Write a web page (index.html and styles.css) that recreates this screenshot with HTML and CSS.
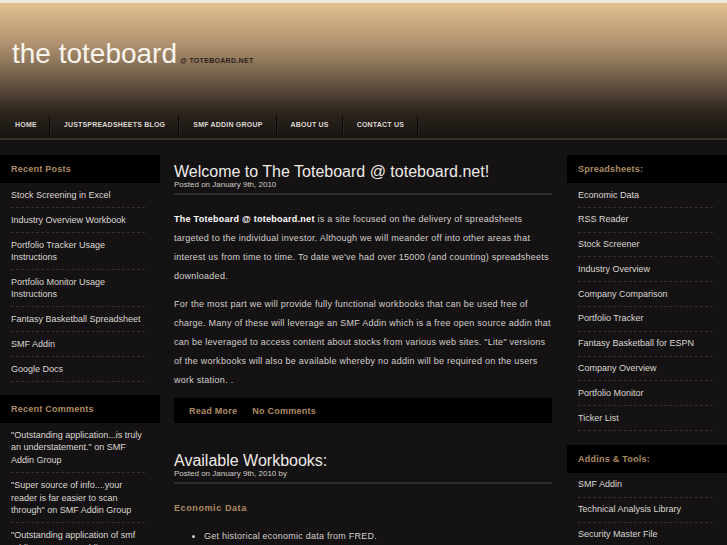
FILE: index.html
```html
<!DOCTYPE html>
<html>
<head>
<meta charset="utf-8">
<title>the toteboard</title>
<link rel="stylesheet" href="styles.css">
</head>
<body>
<div class="topline"></div>
<header class="masthead">
  <h1 class="site-title">the toteboard</h1>
  <span class="site-sub">@ TOTEBOARD.NET</span>
</header>
<nav class="nav">
  <a class="nav-item" href="#">HOME</a>
  <a class="nav-item" href="#">JUSTSPREADSHEETS BLOG</a>
  <a class="nav-item" href="#">SMF ADDIN GROUP</a>
  <a class="nav-item" href="#">ABOUT US</a>
  <a class="nav-item" href="#">CONTACT US</a>
</nav>
<div class="wrap">
  <aside class="sidebar sidebar-left">
    <section class="widget">
      <h2 class="widget-title">Recent Posts</h2>
      <ul class="widget-list">
        <li>Stock Screening in Excel</li>
        <li>Industry Overview Workbook</li>
        <li>Portfolio Tracker Usage Instructions</li>
        <li>Portfolio Monitor Usage Instructions</li>
        <li>Fantasy Basketball Spreadsheet</li>
        <li>SMF Addin</li>
        <li>Google Docs</li>
      </ul>
    </section>
    <section class="widget">
      <h2 class="widget-title">Recent Comments</h2>
      <ul class="widget-list comments">
        <li>"Outstanding application...is truly an understatement." on SMF Addin Group</li>
        <li>"Super source of info....your reader is far easier to scan through" on SMF Addin Group</li>
        <li>"Outstanding application of smf addin..." on SMF Addin Group</li>
      </ul>
    </section>
  </aside>
  <main class="main">
    <article class="post">
      <div class="post-head">
        <h2 class="post-title">Welcome to The Toteboard @ toteboard.net!</h2>
        <div class="post-meta">Posted on January 9th, 2010</div>
      </div>
      <div class="post-body">
        <p><strong>The Toteboard @ toteboard.net</strong> is a site focused on the delivery of spreadsheets targeted to the individual investor. Although we will meander off into other areas that interest us from time to time. To date we've had over 15000 (and counting) spreadsheets downloaded.</p>
        <p>For the most part we will provide fully functional workbooks that can be used free of charge. Many of these will leverage an SMF Addin which is a free open source addin that can be leveraged to access content about stocks from various web sites. "Lite" versions of the workbooks will also be available whereby no addin will be required on the users work station. .</p>
      </div>
      <div class="post-foot">
        <a href="#">Read More</a>
        <a href="#">No Comments</a>
      </div>
    </article>
    <article class="post">
      <div class="post-head">
        <h2 class="post-title">Available Workbooks:</h2>
        <div class="post-meta">Posted on January 9th, 2010 by</div>
      </div>
      <div class="post-body">
        <h3 class="sub-title">Economic Data</h3>
        <ul class="bullets">
          <li>Get historical economic data from FRED.</li>
          <li>Charts and tables of key indicators.</li>
        </ul>
      </div>
    </article>
  </main>
  <aside class="sidebar sidebar-right">
    <section class="widget">
      <h2 class="widget-title">Spreadsheets:</h2>
      <ul class="widget-list">
        <li>Economic Data</li>
        <li>RSS Reader</li>
        <li>Stock Screener</li>
        <li>Industry Overview</li>
        <li>Company Comparison</li>
        <li>Portfolio Tracker</li>
        <li>Fantasy Basketball for ESPN</li>
        <li>Company Overview</li>
        <li>Portfolio Monitor</li>
        <li>Ticker List</li>
      </ul>
    </section>
    <section class="widget">
      <h2 class="widget-title">Addins &amp; Tools:</h2>
      <ul class="widget-list">
        <li>SMF Addin</li>
        <li>Technical Analysis Library</li>
        <li>Security Master File</li>
        <li>Stock Data Downloader</li>
      </ul>
    </section>
  </aside>
</div>
</body>
</html>
```
FILE: styles.css
```css
* { box-sizing: border-box; }
html, body { margin: 0; padding: 0; }
body {
  background: #141212;
  font-family: "Liberation Sans", Arial, sans-serif;
  color: #d6d2ce;
}
a { text-decoration: none; color: inherit; }

.topline { height: 3px; background: #eee8df; }

.masthead {
  height: 107px;
  background: linear-gradient(#e2c08f 0%, #b0926f 38%, #6c5a47 72%, #31271f 100%);
  display: flex;
  align-items: baseline;
  padding: 37px 0 0 12px;
}
.site-title {
  margin: 0;
  font-size: 28px;
  line-height: 28px;
  font-weight: normal;
  color: #f8f4ee;
}
.site-sub {
  margin-left: 3px;
  font-size: 7px;
  font-weight: bold;
  letter-spacing: 0.3px;
  color: #2b2219;
}

.nav {
  height: 30px;
  background: linear-gradient(#30271f, #161311);
  border-bottom: 2px solid #3b2f25;
  display: flex;
  align-items: flex-start;
  padding-top: 6px;
}
.nav-item {
  height: 22px;
  line-height: 18px;
  padding: 0 13px 0 14px;
  font-size: 7px;
  font-weight: bold;
  letter-spacing: 0.2px;
  color: #dcd8d2;
  border-right: 1px solid #0a0807;
  box-shadow: 1px 0 0 #2a231d;
}
.nav-item:first-child { padding-left: 15px; padding-right: 12px; }

.wrap {
  display: flex;
  align-items: flex-start;
  padding-top: 15px;
}

.sidebar { width: 160px; flex: none; }

.widget { margin-bottom: 14px; }
.sidebar-left .widget { margin-bottom: 13px; }
.widget-title {
  margin: 0;
  background: #000;
  height: 28px;
  padding: 8px 11px;
  font-size: 9px;
  line-height: 12px;
  font-weight: bold;
  letter-spacing: 0.25px;
  color: #ad8c63;
}
.widget-list {
  list-style: none;
  margin: 0;
  padding: 0 15px 0 11px;
}
.sidebar-right .widget-list { padding-right: 14px; }
.widget-list li {
  padding: 6.5px 0 5.5px;
  font-size: 9px;
  line-height: 11.8px;
  color: #dcd8d3;
  border-bottom: 1px dashed #3a2f25;
}
.sidebar-left .widget-list li { padding: 6px 0; line-height: 12px; }
.sidebar-left .comments li { line-height: 12.4px; }

.main {
  width: 378px;
  flex: none;
  margin: 0 15px 0 14px;
  padding-top: 9px;
}
.post { margin-bottom: 30px; }
.post-head {
  padding-bottom: 4px;
  border-bottom: 2px solid #2e2c2c;
}
.post-title {
  margin: 0;
  font-size: 16px;
  line-height: 16px;
  font-weight: normal;
  color: #eeeae6;
}
.post-meta {
  font-size: 8px;
  line-height: 9px;
  color: #d0ccc8;
}
.post-body { padding-top: 15px; }
.post-body p {
  margin: 0 0 9px;
  font-size: 9px;
  line-height: 19px;
  letter-spacing: 0.26px;
  color: #d4d0cc;
}
.post-body p:last-child { margin-bottom: 0; }
.post-body strong { color: #fff; }
.post-foot {
  margin-top: 8px;
  height: 25px;
  background: #000;
  display: flex;
  align-items: center;
  gap: 15px;
  padding-left: 15px;
  font-size: 9px;
  font-weight: bold;
  letter-spacing: 0.25px;
  color: #ad8c63;
}
.sub-title {
  margin: 0 0 9px;
  font-size: 9px;
  line-height: 19px;
  font-weight: bold;
  letter-spacing: 0.6px;
  color: #ad8c63;
}
.bullets {
  margin: 0;
  padding-left: 30px;
  font-size: 9px;
  line-height: 19px;
  letter-spacing: 0.24px;
  color: #d4d0cc;
}
```
